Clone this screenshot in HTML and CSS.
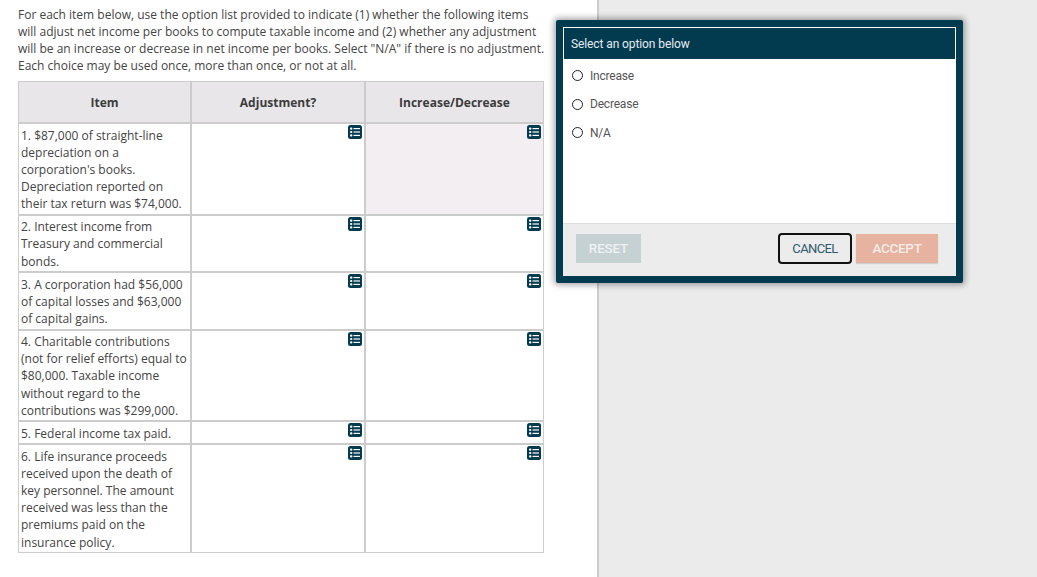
FILE: index.html
```html
<!DOCTYPE html>
<html lang="en">
<head>
<meta charset="utf-8">
<title>Option list</title>
<link rel="stylesheet" href="styles.css">
</head>
<body>
<svg class="sprite" width="0" height="0" aria-hidden="true">
  <symbol id="list" viewBox="0 0 14 14">
    <rect width="14" height="14" rx="2.5" fill="#023a4f"/>
    <g fill="#fff">
      <rect x="2" y="2.5" width="2.4" height="2.2" rx="1"/>
      <rect x="2" y="5.9" width="2.4" height="2.2" rx="1"/>
      <rect x="2" y="9.3" width="2.4" height="2.2" rx="1"/>
      <rect x="5.5" y="3" width="6.5" height="1.2"/>
      <rect x="5.5" y="6.4" width="6.5" height="1.2"/>
      <rect x="5.5" y="9.8" width="6.5" height="1.2"/>
    </g>
  </symbol>
</svg>
<div class="page">
  <main class="content">
    <p class="intro">For each item below, use the option list provided to indicate (1) whether the following items<br>will adjust net income per books to compute taxable income and (2) whether any adjustment<br>will be an increase or decrease in net income per books. Select "N/A" if there is no adjustment.<br>Each choice may be used once, more than once, or not at all.</p>
    <table class="grid">
      <thead>
        <tr><th class="col-item">Item</th><th class="col-adj">Adjustment?</th><th class="col-inc">Increase/Decrease</th></tr>
      </thead>
      <tbody>
        <tr>
          <td>1. $87,000 of straight-line<br>depreciation on a<br>corporation's books.<br>Depreciation reported on<br>their tax return was $74,000.</td>
          <td class="pick"><svg class="ico"><use href="#list"/></svg></td>
          <td class="pick active"><svg class="ico"><use href="#list"/></svg></td>
        </tr>
        <tr>
          <td>2. Interest income from<br>Treasury and commercial<br>bonds.</td>
          <td class="pick"><svg class="ico"><use href="#list"/></svg></td>
          <td class="pick"><svg class="ico"><use href="#list"/></svg></td>
        </tr>
        <tr>
          <td>3. A corporation had $56,000<br>of capital losses and $63,000<br>of capital gains.</td>
          <td class="pick"><svg class="ico"><use href="#list"/></svg></td>
          <td class="pick"><svg class="ico"><use href="#list"/></svg></td>
        </tr>
        <tr>
          <td>4. Charitable contributions<br>(not for relief efforts) equal to<br>$80,000. Taxable income<br>without regard to the<br>contributions was $299,000.</td>
          <td class="pick"><svg class="ico"><use href="#list"/></svg></td>
          <td class="pick"><svg class="ico"><use href="#list"/></svg></td>
        </tr>
        <tr>
          <td>5. Federal income tax paid.</td>
          <td class="pick"><svg class="ico"><use href="#list"/></svg></td>
          <td class="pick"><svg class="ico"><use href="#list"/></svg></td>
        </tr>
        <tr>
          <td>6. Life insurance proceeds<br>received upon the death of<br>key personnel. The amount<br>received was less than the<br>premiums paid on the<br>insurance policy.</td>
          <td class="pick"><svg class="ico"><use href="#list"/></svg></td>
          <td class="pick"><svg class="ico"><use href="#list"/></svg></td>
        </tr>
      </tbody>
    </table>
  </main>
  <aside class="side"></aside>
</div>
<section class="modal">
  <header class="modal-head">Select an option below</header>
  <div class="modal-body">
    <label class="opt"><span class="radio"></span>Increase</label>
    <label class="opt"><span class="radio"></span>Decrease</label>
    <label class="opt"><span class="radio"></span>N/A</label>
  </div>
  <footer class="modal-foot">
    <button class="btn reset">RESET</button>
    <span class="spacer"></span>
    <button class="btn cancel">CANCEL</button>
    <button class="btn accept">ACCEPT</button>
  </footer>
</section>
</body>
</html>
```
FILE: styles.css
```css
* { box-sizing: border-box; }
html, body { margin: 0; height: 577px; overflow: hidden; background: #fff; }
.sprite { position: absolute; }
.page { display: flex; height: 577px; }
.content {
  width: 599px;
  border-right: 2px solid #ccc;
  padding: 6px 0 0 18px;
  font-family: "Open Sans", sans-serif;
  font-size: 12px;
  color: #444;
}
.side { flex: 1; background: #ebebeb; }
.intro { margin: 0 0 7px; line-height: 17px; white-space: nowrap; }
.grid { border-collapse: separate; border-spacing: 0; table-layout: fixed; width: 526px; line-height: 17.14px; }
.col-item { width: 173px; }
.col-adj { width: 174px; }
.col-inc { width: 179px; }
.grid th, .grid td { border: 1px solid #ccc; }
.grid th { height: 42px; background: #e9e6ea; font-weight: 700; text-align: center; color: #3c3c3c; padding: 0; line-height: 17px; }
.grid td { padding: 2.6px 0 1.4px 2px; vertical-align: top; white-space: nowrap; }
.grid td.pick { padding: 1px 2px 0 0; text-align: right; line-height: 0; }
.grid td.active { background: #f2eef2; }
.ico { width: 14px; height: 14px; display: inline-block; }
.modal {
  position: absolute; left: 556px; top: 20px; width: 407px; height: 263px;
  border: 7px solid #023a4f; border-radius: 2px;
  background: #fff;
  display: flex; flex-direction: column;
  font-family: Roboto, sans-serif;
  box-shadow: 0 0 6px 2px rgba(0,0,0,.35);
}
.modal-head {
  height: 32px; border: 1px solid #fff; border-bottom: 0;
  background: #023a4f; color: #e6edf0; font-size: 12px; letter-spacing: -.1px; line-height: 32px; padding-left: 7px;
}
.modal-body { flex: 1; padding-top: 2.7px; }
.opt { display: flex; align-items: center; gap: 7px; height: 28.5px; padding-left: 9px; font-size: 12px; letter-spacing: -.2px; color: #555; }
.radio { width: 11px; height: 11px; border: 1.5px solid #222; border-radius: 50%; background: #fff; }
.modal-foot {
  height: 53px; background: #ececec; border-top: 1px solid #ddd;
  display: flex; align-items: center; padding: 0 18px 4px 13px; gap: 4px;
}
.spacer { flex: 1; }
.btn { font-family: Roboto, sans-serif; font-size: 13.5px; height: 29px; border: 0; padding: 0; color: #fff; }
.reset { width: 65px; background: #c6d1d4; color: #eef2f3; font-weight: 500; letter-spacing: -.2px; }
.cancel { width: 74px; height: 31px; background: #ececec; border: 2px solid #111; border-radius: 4px; color: #2e5a6c; font-size: 13px; letter-spacing: -.6px; }
.accept { width: 82px; background: #e5b3a0; color: #f8ece7; font-weight: 500; letter-spacing: -.3px; box-shadow: 0 1px 1px rgba(0,0,0,.12); }
```
